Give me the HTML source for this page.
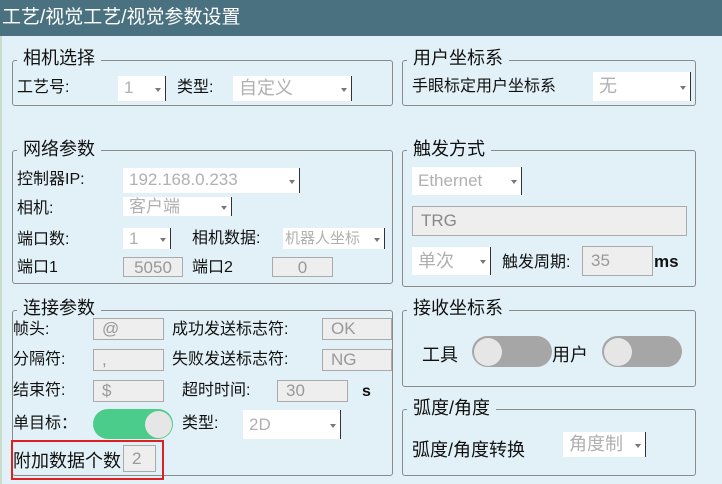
<!DOCTYPE html><html><head><meta charset="utf-8"><style>
*{margin:0;padding:0;box-sizing:border-box}
body{width:722px;height:484px;background:#e2f1f7;position:relative;overflow:hidden;font-family:"Liberation Sans","Noto Sans CJK SC",sans-serif;color:#111}
.a{position:absolute;white-space:nowrap}
.hd{left:0;top:0;width:722px;height:36px;background:#4a7180;color:#fff;font-size:19px;line-height:36px;padding-left:2px}
.g{position:absolute;border:1px solid #8a8a8a;border-radius:3px}
.lg{position:absolute;background:#e2f1f7;font-size:18px;padding:0 6px;line-height:20px}
.t{font-size:16px;line-height:20px}
.cb{position:absolute;background:#fff;color:#b0b0b0;font-size:17px;line-height:24px;padding-left:6px;overflow:hidden}
.cb:after{content:"";position:absolute;right:0;top:0;width:16px;height:100%;border-right:1px solid #333;border-bottom:1px solid #333}
.cb:before{content:"";position:absolute;right:5px;top:50%;border-left:3px solid transparent;border-right:3px solid transparent;border-top:4px solid #777;margin-top:-1px}
.tb{position:absolute;background:#eee;border:1px solid #aaa;color:#999;font-size:17px;line-height:20px;padding-left:8px}
</style></head><body>
<div class="a hd">工艺/视觉工艺/视觉参数设置</div>
<div class="a" style="left:0;top:36px;width:2px;height:448px;background:#c8dccb"></div>

<div class="g" style="left:12px;top:60px;width:381px;height:46px"></div>
<div class="lg" style="left:17px;top:48px">相机选择</div>
<div class="a t" style="left:17px;top:78px">工艺号:</div>
<div class="cb" style="left:118px;top:76px;width:48px;height:25px">1</div>
<div class="a t" style="left:177px;top:78px">类型:</div>
<div class="cb" style="left:233px;top:76px;width:119px;height:25px;font-size:18px">自定义</div>

<div class="g" style="left:12px;top:150px;width:381px;height:134px"></div>
<div class="lg" style="left:17px;top:139px">网络参数</div>
<div class="a t" style="left:17px;top:170px">控制器IP:</div>
<div class="cb" style="left:123px;top:168px;width:177px;height:25px">192.168.0.233</div>
<div class="a t" style="left:17px;top:199px">相机:</div>
<div class="cb" style="left:123px;top:197px;width:109px;height:19px;line-height:19px">客户端</div>
<div class="a t" style="left:17px;top:230px">端口数:</div>
<div class="cb" style="left:123px;top:228px;width:48px;height:21px;line-height:21px">1</div>
<div class="a t" style="left:192px;top:229px">相机数据:</div>
<div class="cb" style="left:283px;top:228px;width:102px;height:21px;line-height:21px;font-size:15px;padding-left:2px">机器人坐标</div>
<div class="a t" style="left:17px;top:258px">端口1</div>
<div class="tb" style="left:123px;top:257px;width:60px;height:20px;text-align:center;padding:0">5050</div>
<div class="a t" style="left:192px;top:258px">端口2</div>
<div class="tb" style="left:272px;top:257px;width:61px;height:20px;text-align:center;padding:0">0</div>

<div class="g" style="left:12px;top:310px;width:381px;height:166px"></div>
<div class="lg" style="left:17px;top:298px">连接参数</div>
<div class="a t" style="left:13px;top:320px">帧头:</div>
<div class="tb" style="left:93px;top:318px;width:71px;height:22px">@</div>
<div class="a t" style="left:172px;top:320px">成功发送标志符:</div>
<div class="tb" style="left:322px;top:318px;width:70px;height:22px">OK</div>
<div class="a t" style="left:13px;top:350px">分隔符:</div>
<div class="tb" style="left:93px;top:349px;width:71px;height:22px">,</div>
<div class="a t" style="left:172px;top:350px">失败发送标志符:</div>
<div class="tb" style="left:322px;top:349px;width:70px;height:22px">NG</div>
<div class="a t" style="left:13px;top:381px">结束符:</div>
<div class="tb" style="left:93px;top:380px;width:71px;height:22px">$</div>
<div class="a t" style="left:182px;top:381px">超时时间:</div>
<div class="tb" style="left:277px;top:380px;width:71px;height:22px">30</div>
<div class="a" style="left:362px;top:383px;font-size:16px;font-weight:bold">s</div>
<div class="a t" style="left:13px;top:414px">单目标：</div>
<div class="a" style="left:93px;top:409px;width:80px;height:30px;border-radius:15px;background:#4ccc8a"></div>
<div class="a" style="left:145px;top:411px;width:27px;height:27px;border-radius:50%;background:#e6e6e6"></div>
<div class="a t" style="left:182px;top:414px">类型:</div>
<div class="cb" style="left:243px;top:410px;width:98px;height:29px;line-height:29px">2D</div>
<div class="a" style="left:11px;top:440px;width:153px;height:40px;border:2px solid #e02020"></div>
<div class="a" style="left:13px;top:447px;font-size:18px;width:110px;overflow:hidden">附加数据个数</div>
<div class="tb" style="left:123px;top:445px;width:33px;height:27px;line-height:25px;font-size:17px">2</div>

<div class="g" style="left:402px;top:60px;width:294px;height:46px"></div>
<div class="lg" style="left:407px;top:48px">用户坐标系</div>
<div class="a t" style="left:412px;top:77px">手眼标定用户坐标系</div>
<div class="cb" style="left:593px;top:72px;width:98px;height:29px;line-height:29px;font-size:18px">无</div>

<div class="g" style="left:402px;top:150px;width:294px;height:137px"></div>
<div class="lg" style="left:407px;top:139px">触发方式</div>
<div class="cb" style="left:412px;top:167px;width:110px;height:28px;line-height:28px">Ethernet</div>
<div class="tb" style="left:412px;top:206px;width:275px;height:30px;line-height:28px;font-size:17px;color:#888">TRG</div>
<div class="cb" style="left:412px;top:247px;width:79px;height:28px;line-height:28px;font-size:18px">单次</div>
<div class="a t" style="left:502px;top:253px">触发周期:</div>
<div class="tb" style="left:582px;top:246px;width:71px;height:30px;line-height:28px">35</div>
<div class="a" style="left:654px;top:252px;font-size:17px;font-weight:bold">ms</div>

<div class="g" style="left:402px;top:310px;width:294px;height:77px"></div>
<div class="lg" style="left:407px;top:298px">接收坐标系</div>
<div class="a" style="left:422px;top:341px;font-size:18px">工具</div>
<div class="a" style="left:472px;top:336px;width:80px;height:31px;border-radius:16px;background:#a6a6a6"></div>
<div class="a" style="left:474px;top:338px;width:28px;height:28px;border-radius:50%;background:#e6e6e6"></div>
<div class="a" style="left:552px;top:341px;font-size:18px">用户</div>
<div class="a" style="left:602px;top:336px;width:80px;height:31px;border-radius:16px;background:#a6a6a6"></div>
<div class="a" style="left:604px;top:338px;width:28px;height:28px;border-radius:50%;background:#e6e6e6"></div>

<div class="g" style="left:402px;top:409px;width:294px;height:67px"></div>
<div class="lg" style="left:407px;top:398px">弧度/角度</div>
<div class="a" style="left:412px;top:436px;font-size:18px">弧度/角度转换</div>
<div class="cb" style="left:563px;top:432px;width:83px;height:25px;font-size:18px">角度制</div>
</body></html>
